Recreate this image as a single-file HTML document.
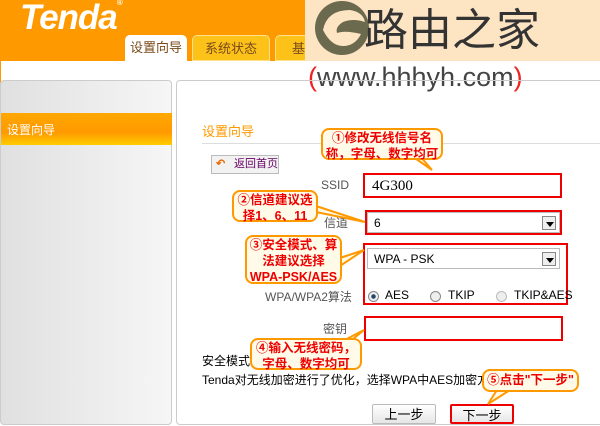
<!DOCTYPE html>
<html><head><meta charset="utf-8"><style>
*{margin:0;padding:0;box-sizing:border-box}
body{width:600px;height:420px;overflow:hidden;background:#fff;font-family:"Liberation Sans","Noto Sans CJK SC",sans-serif;position:relative;font-size:12px}
.a{position:absolute}
.hdr{left:0;top:0;width:305px;height:61px;background:#ff9900}
.tenda{left:20px;top:-2px;color:#fff;font:italic bold 35px "Liberation Sans",sans-serif;letter-spacing:-1px}
.tab{top:35px;height:26px;border-radius:5px 5px 0 0;text-align:center;line-height:26px;font-size:13px}
.wm{left:305px;top:0;width:295px;height:61px;background:#fde4c2}
.cb{border:2px solid #f90;border-radius:8px;background:#fffbe8;color:#e00;font-weight:bold;text-align:center;font-size:12.5px;line-height:16px}
.red{border:2px solid #e00}
.lbl{color:#555;font-size:12px}
.sel{background:#fff;border:1px solid #bbb}
.arr{position:absolute;right:3px;top:3px;width:14px;height:14px;border:1px solid #888;background:#eee}
.arr:after{content:"";position:absolute;left:3px;top:5px;border:4px solid transparent;border-top:5px solid #000}
.btn{top:404px;width:64px;height:20px;background:linear-gradient(#fff,#e6e6e6);border:1px solid #bbb;border-radius:2px;text-align:center;font-size:13px;line-height:20px}
.rad{width:11px;height:11px;border-radius:50%;border:1px solid #888;background:#eee}
</style></head><body>
<div class="a hdr"></div>
<div class="a tenda">Tenda<span style="font-size:8px;vertical-align:top">®</span></div>
<div class="a tab" style="left:125px;width:62px;background:#fff;color:#7a4a1a">设置向导</div>
<div class="a tab" style="left:192px;width:78px;background:#fcc21a;color:#7a4a1a;border:1px solid #fde08a">系统状态</div>
<div class="a tab" style="left:275px;width:60px;background:#fcc21a;color:#7a4a1a;border:1px solid #fde08a">基本</div>
<div class="a wm"></div>
<svg class="a" style="left:305px;top:0" width="100" height="61"><circle cx="37" cy="28" r="27" fill="#6b6a4e"/><path d="M18 30 Q22 10 45 10 Q58 12 60 22 Q48 18 38 22 Q30 27 32 33 Q40 30 56 34 Q50 46 38 46 Q26 46 18 30Z" fill="#fde4c2"/></svg>
<div class="a" style="left:364px;top:0px;font:44px 'Noto Sans CJK SC',sans-serif;color:#333;line-height:52px">路由之家</div>
<div class="a" style="left:308px;top:61px;font-size:27px;color:#444;line-height:32px"><span style="color:#e22">(</span>www.hhhyh.com<span style="color:#e22">)</span></div>
<div class="a" style="left:0;top:61px;width:1px;height:359px;background:#f90"></div>
<div class="a" style="left:0;top:80px;width:172px;height:345px;border:1px solid #ccc;border-radius:4px;background:linear-gradient(90deg,#e0e0e0,#f6f6f6)"></div>
<div class="a" style="left:1px;top:113px;width:171px;height:32px;background:linear-gradient(#ffa800,#ff9900 60%,#ffcc00);color:#fff;padding:8px 0 0 6px;font-size:12px">设置向导</div>
<div class="a" style="left:176px;top:80px;width:430px;height:345px;border:1px solid #ccc;border-radius:4px"></div>
<div class="a" style="left:202px;top:121px;color:#f90;font-size:13px">设置向导</div>
<div class="a" style="left:202px;top:143px;width:398px;height:1px;background:#ddd"></div>
<div class="a" style="left:211px;top:155px;width:68px;height:19px;border:1px solid #bbb;background:#f2f2f2;color:#606;font-size:11px;line-height:17px;padding-left:22px">返回首页<span style="position:absolute;left:4px;top:0;color:#e60;font-weight:bold">↶</span></div>
<div class="a lbl" style="left:321px;top:178px">SSID</div>
<div class="a red" style="left:363px;top:173px;width:199px;height:25px;padding:3px 7px;font:15px 'Liberation Serif',serif">4G300</div>
<div class="a lbl" style="left:324px;top:214px">信道</div>
<div class="a red" style="left:365px;top:210px;width:197px;height:25px"><div class="a sel" style="left:0;top:0;width:193px;height:21px;padding:3px 6px">6<div class="arr"></div></div></div>
<div class="a red" style="left:363px;top:243px;width:205px;height:62px"><div class="a sel" style="left:2px;top:3px;width:193px;height:21px;padding:3px 6px;font-size:12px">WPA - PSK<div class="arr"></div></div></div>
<div class="a lbl" style="left:265px;top:288px">WPA/WPA2算法</div>
<div class="a rad" style="left:368px;top:291px;background:radial-gradient(#246 30%,#eee 40%)"></div>
<div class="a" style="left:385px;top:288px">AES</div>
<div class="a rad" style="left:430px;top:291px"></div>
<div class="a" style="left:448px;top:288px">TKIP</div>
<div class="a rad" style="left:496px;top:291px;border-color:#bbb"></div>
<div class="a" style="left:514px;top:288px">TKIP&amp;AES</div>
<div class="a lbl" style="left:323px;top:320px">密钥</div>
<div class="a red" style="left:364px;top:316px;width:199px;height:25px"></div>
<div class="a" style="left:202px;top:352px;font-size:12px">安全模式</div>
<div class="a" style="left:202px;top:371px;font-size:12px;white-space:nowrap">Tenda对无线加密进行了优化，选择WPA中AES加密方式，</div>
<div class="a btn" style="left:372px">上一步</div>
<div class="a btn" style="left:450px;border:2px solid #e00">下一步</div>
<svg class="a" style="left:0;top:0" width="600" height="420"><g fill="#fffbe8" stroke="#f90" stroke-width="2"><path d="M412 156 L432 170 L420 156Z"/><path d="M316 206 L365 222 L316 212Z"/><path d="M340 258 L364 250 L340 266Z"/><path d="M337 344 L364 330 L347 344Z"/><path d="M497 390 L488 404 L510 390Z"/></g></svg>
<div class="a cb" style="left:321px;top:128px;width:122px;height:32px">①修改无线信号名<br>称，字母、数字均可</div>
<div class="a cb" style="left:232px;top:190px;width:86px;height:32px">②信道建议选<br>择1、6、11</div>
<div class="a cb" style="left:245px;top:235px;width:97px;height:49px">③安全模式、算<br>法建议选择<br>WPA-PSK/AES</div>
<div class="a cb" style="left:250px;top:338px;width:112px;height:32px">④输入无线密码，<br>字母、数字均可</div>
<div class="a cb" style="left:482px;top:369px;width:97px;height:23px;line-height:19px">⑤点击"下一步"</div>
</body></html>
